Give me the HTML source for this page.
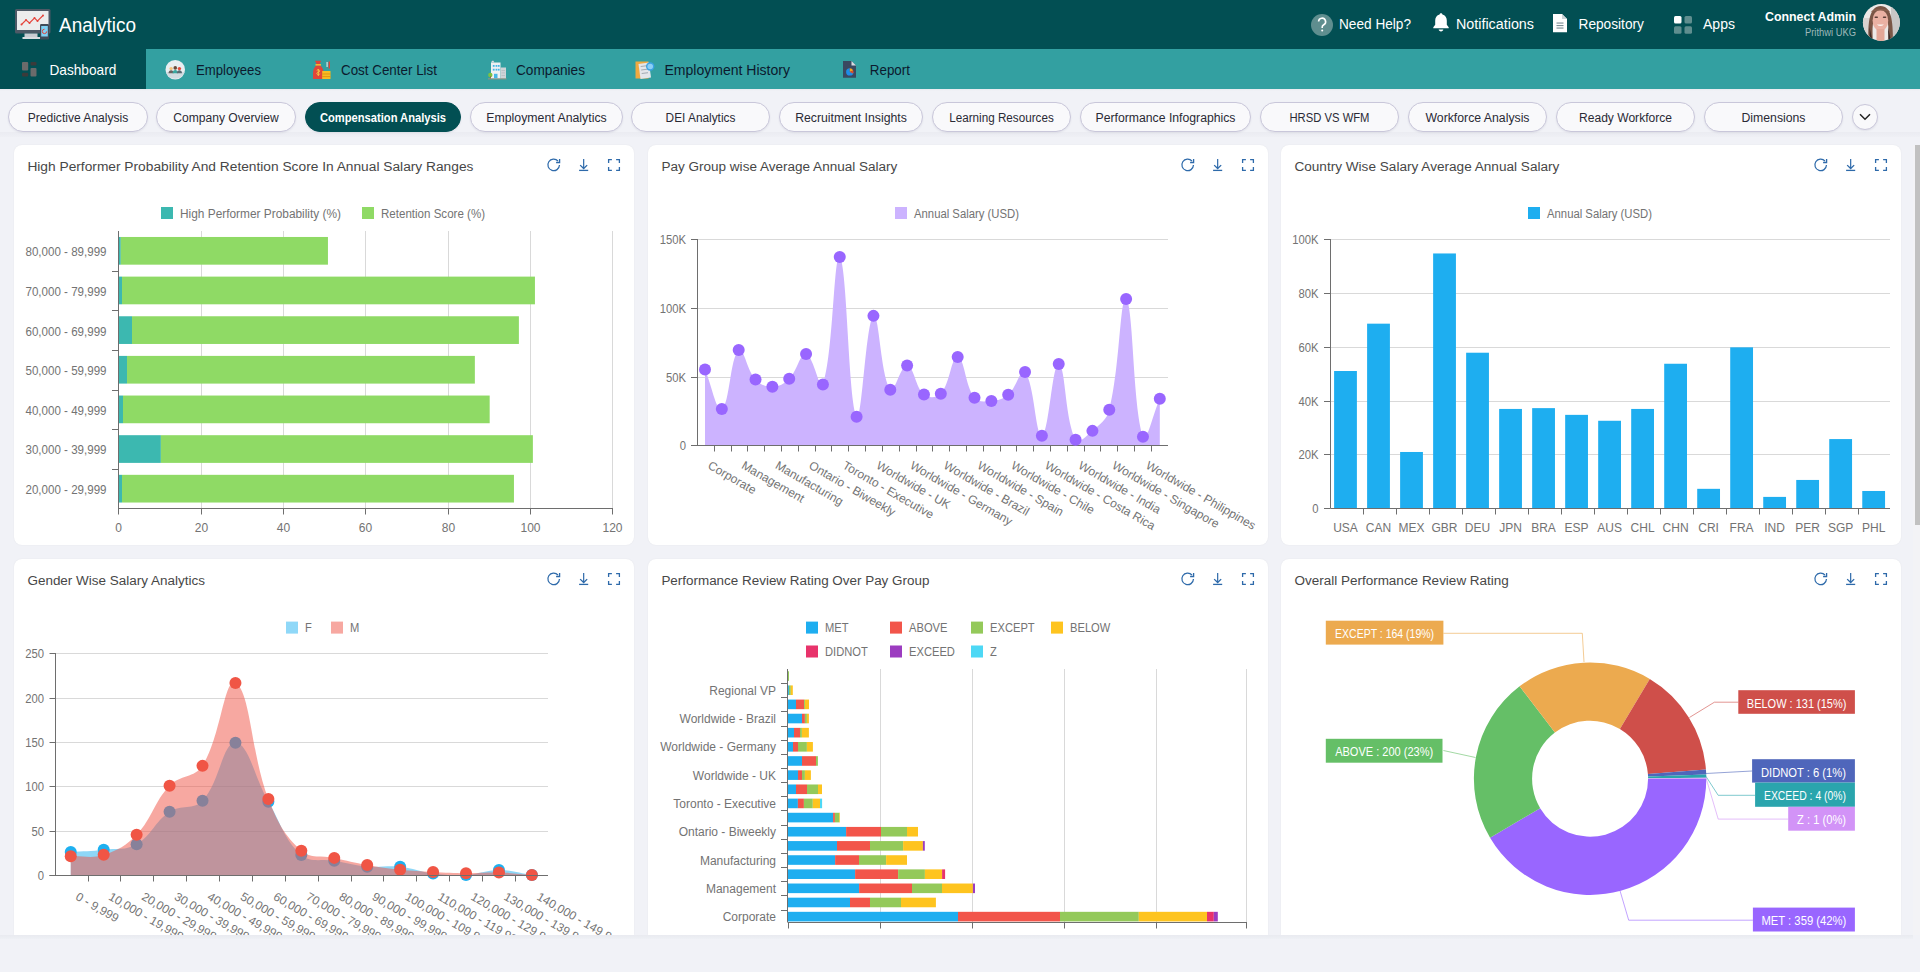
<!DOCTYPE html>
<html><head><meta charset="utf-8">
<style>
*{box-sizing:border-box;margin:0;padding:0}
html,body{width:1920px;height:972px;overflow:hidden;background:#f1f2f7;font-family:"Liberation Sans",sans-serif;color:#333}
.abs{position:absolute}
.pill{position:absolute;top:102px;height:30px;border:1px solid #c9c7da;border-radius:15px;background:#f9f9fb;box-shadow:0 1px 2px rgba(40,40,80,.08)}
.pill.act{background:#024f53;border-color:#024f53}
.panel{position:absolute;background:#fff;border-radius:8px;box-shadow:0 0 1.5px rgba(0,0,0,.07)}
svg text{font-family:"Liberation Sans",sans-serif}
</style></head>
<body>
<div class="abs" style="left:0;top:0;width:1920px;height:49px;background:#024f53"></div>
<div class="abs" style="left:0;top:49px;width:1920px;height:40px;background:#33a0a1"></div>
<div class="abs" style="left:0;top:49px;width:146px;height:40px;background:#024f53"></div>
<div class="abs" style="left:0;top:89px;width:1920px;height:2px;background:linear-gradient(rgba(0,0,0,.03),rgba(0,0,0,0))"></div>

<div class="abs" style="left:0;top:132px;width:1920px;height:5px;background:linear-gradient(rgba(60,60,90,.035),rgba(60,60,90,.01))"></div>
<div class="pill" style="left:8px;width:140px"></div>
<div class="pill" style="left:156px;width:140px"></div>
<div class="pill act" style="left:305px;width:156px"></div>
<div class="pill" style="left:470px;width:153px"></div>
<div class="pill" style="left:631px;width:139px"></div>
<div class="pill" style="left:779px;width:144px"></div>
<div class="pill" style="left:932px;width:139px"></div>
<div class="pill" style="left:1080px;width:171px"></div>
<div class="pill" style="left:1260px;width:139px"></div>
<div class="pill" style="left:1408px;width:139px"></div>
<div class="pill" style="left:1556px;width:139px"></div>
<div class="pill" style="left:1704px;width:139px"></div>
<div class="pill" style="left:1852px;top:104px;width:26px;height:26px;border-radius:13px"></div>
<svg class="abs" style="left:0;top:0" width="1920" height="140" viewBox="0 0 1920 140"><g transform="translate(15,9)">
 <rect x="0" y="0" width="35.5" height="24.5" rx="1.5" fill="#4d5966"/>
 <rect x="2" y="2" width="31.5" height="19" fill="#ececed"/>
 <polyline points="6.5,15.5 11,11 14.5,14 19.5,9 22.5,12 28,6.5" fill="none" stroke="#e5443c" stroke-width="1.1"/>
 <circle cx="6.5" cy="15.5" r="1" fill="#e5443c"/><circle cx="11" cy="11" r="1" fill="#e5443c"/><circle cx="14.5" cy="14" r="1" fill="#e5443c"/><circle cx="19.5" cy="9" r="1" fill="#e5443c"/><circle cx="22.5" cy="12" r="1" fill="#e5443c"/><circle cx="28" cy="6.5" r="1" fill="#e5443c"/>
 <rect x="9.5" y="24.5" width="13" height="4" fill="#c9ccd2"/>
 <rect x="7.5" y="28" width="17.5" height="2" fill="#d9dce0"/>
 <rect x="25" y="15" width="9" height="15.5" rx="1.2" fill="#3f4b58"/>
 <rect x="26.2" y="17" width="6.6" height="10.5" fill="#7fd0f3"/>
 <path d="M29.5 20.2a2.2 2.2 0 1 0 2.2 2.2" fill="none" stroke="#e5443c" stroke-width="1"/>
</g><text x="59.00" y="32.30" font-size="20" fill="#fff" textLength="77.00" lengthAdjust="spacingAndGlyphs">Analytico</text><circle cx="1322" cy="25" r="11" fill="#5f8e8f"/><path d="M1318.6 21.6a3.5 3.5 0 1 1 5.2 3.1c-1 .6-1.6 1.2-1.6 2.4v.8" fill="none" stroke="#fff" stroke-width="1.6"/><circle cx="1322.2" cy="30.6" r="1" fill="#fff"/><text x="1339.00" y="28.70" font-size="14" fill="#fff" textLength="72.00" lengthAdjust="spacingAndGlyphs">Need Help?</text><path d="M1441 13.2c.9 0 1.4.6 1.4 1.3 2.9.7 4.4 3 4.4 6v4.2l1.9 2.5v1H1433.3v-1l1.9-2.5v-4.2c0-3 1.5-5.3 4.4-6 0-.7.5-1.3 1.4-1.3z" fill="#fff"/><path d="M1438.7 29.6h4.6c0 1.1-1 1.9-2.3 1.9s-2.3-.8-2.3-1.9z" fill="#fff"/><text x="1456.00" y="28.70" font-size="14" fill="#fff" textLength="78.00" lengthAdjust="spacingAndGlyphs">Notifications</text><path d="M1553 14h9l5 5v13.3h-14z" fill="#fff"/><path d="M1562 14v5h5z" fill="#c9d3d6"/><g fill="#7d8e95"><rect x="1556.5" y="22.5" width="7" height="1.1"/><rect x="1556.5" y="25" width="7" height="1.1"/><rect x="1556.5" y="27.5" width="7" height="1.1"/></g><text x="1578.50" y="28.70" font-size="14" fill="#fff" textLength="65.40" lengthAdjust="spacingAndGlyphs">Repository</text><rect x="1674" y="16" width="7.5" height="7.5" rx="1.5" fill="#fff"/><rect x="1684.5" y="16" width="7.5" height="7.5" rx="1.5" fill="#5f8e8f"/><rect x="1674" y="26.3" width="7.5" height="7.5" rx="1.5" fill="#5f8e8f"/><rect x="1684.5" y="26.3" width="7.5" height="7.5" rx="1.5" fill="#5f8e8f"/><text x="1703.00" y="28.70" font-size="14" fill="#fff" textLength="32.00" lengthAdjust="spacingAndGlyphs">Apps</text><text x="1856.00" y="20.80" font-size="13" fill="#fff" text-anchor="end" font-weight="bold" textLength="91.00" lengthAdjust="spacingAndGlyphs">Connect Admin</text><text x="1856.00" y="35.60" font-size="10.5" fill="#9fb9ba" text-anchor="end" textLength="51.00" lengthAdjust="spacingAndGlyphs">Prithwi UKG</text><defs><clipPath id="av"><circle cx="1881.4" cy="22.5" r="18.5"/></clipPath></defs>
<g clip-path="url(#av)">
 <rect x="1862" y="3" width="40" height="40" fill="#ece9e7"/>
 <rect x="1891" y="3" width="11" height="40" fill="#c9c7c6"/>
 <rect x="1862" y="18" width="8" height="25" fill="#d8d2cf"/>
 <path d="M1868.5 43 C1868 22 1869 7 1880.5 6 C1892 6 1893 22 1893 43 L1888.5 43 C1889 30 1889 12 1880.5 12 C1872 12 1872 30 1873 43z" fill="#7a5646"/>
 <ellipse cx="1880.4" cy="20.5" rx="7.8" ry="10.5" fill="#eab1a3"/>
 <rect x="1876.5" y="29" width="8" height="14" fill="#e3a797"/>
 <path d="M1871 12 C1872 8 1889 8 1890 12 C1886 10 1875 10 1871 12z" fill="#8a6150"/>
 <rect x="1874.5" y="16.5" width="3.5" height="1.6" rx=".8" fill="#5a3d36"/><rect x="1882.8" y="16.5" width="3.5" height="1.6" rx=".8" fill="#5a3d36"/>
 <path d="M1876.8 24.5 Q1880.4 27.5 1884 24.5z" fill="#fbf4f0"/>
 <path d="M1869.5 27 L1873 43 L1870 43z" fill="#3c2a26"/><path d="M1888 27 L1891.5 43 L1888.5 43z" fill="#3c2a26"/>
</g><g transform="translate(22,62)"><rect x="0" y="0" width="6.2" height="8.5" rx="1" fill="#6b6b6b"/><rect x="8.5" y="0" width="6" height="3.6" rx="1" fill="#3b3b3b"/><rect x="0" y="10.8" width="6.2" height="3.8" rx="1" fill="#3b3b3b"/><rect x="8.5" y="6" width="6" height="8.6" rx="1" fill="#6b6b6b"/></g><text x="49.50" y="75.10" font-size="15" fill="#fff" textLength="66.80" lengthAdjust="spacingAndGlyphs">Dashboard</text><g transform="translate(165.5,60)">
 <circle cx="9.75" cy="9.75" r="9.75" fill="#e9eef1"/>
 <path d="M.5 12 H19 A9.75 9.75 0 0 1 .5 12z" fill="#d2dbe1"/>
 <circle cx="5.6" cy="8.6" r="1.7" fill="#f4c27a"/><circle cx="9.75" cy="7.9" r="1.8" fill="#6a4b3a"/><circle cx="13.9" cy="8.6" r="1.7" fill="#e24b3b"/>
 <path d="M3 13.2c0-2 1.2-3 2.6-3s2.6 1 2.6 3z" fill="#6b6260"/><path d="M7.1 13.2c0-2.2 1.2-3.3 2.65-3.3s2.65 1.1 2.65 3.3z" fill="#3aa6a0"/><path d="M11.3 13.2c0-2 1.2-3 2.6-3s2.6 1 2.6 3z" fill="#5a6a72"/>
</g><text x="196.00" y="75.10" font-size="15" fill="#0c1a2e" textLength="65.00" lengthAdjust="spacingAndGlyphs">Employees</text><g transform="translate(312,60)">
 <path d="M4.5 4 L3 0.8 L9 .8 L7.8 4z" fill="#e0453a"/>
 <path d="M1 13.5C1 8.5 3.5 5 6.3 5s5.3 3.5 5.3 8.5v5.5H1z" fill="#e0453a"/>
 <rect x="3.5" y="4" width="5.5" height="1.6" fill="#f5b82e"/>
 <path d="M6.3 9v7" stroke="#f5c542" stroke-width="1"/><path d="M4.8 10.5c0-1 3-1 3 .5s-3 1-3 2.5 3 1.5 3 .2" fill="none" stroke="#f5c542" stroke-width=".9"/>
 <rect x="10.2" y="11" width="8.3" height="8" fill="#f6bd22"/>
 <g fill="#dd8f12"><rect x="10.2" y="13.5" width="8.3" height=".9"/><rect x="10.2" y="16.2" width="8.3" height=".9"/></g>
 <rect x="14.5" y="2" width="1.2" height="5" fill="#dfe3e6"/><rect x="16.6" y="1.5" width="1.4" height="7" fill="#e0453a"/>
</g><text x="341.00" y="75.10" font-size="15" fill="#0c1a2e" textLength="96.00" lengthAdjust="spacingAndGlyphs">Cost Center List</text><g transform="translate(488,60)">
 <rect x="3" y="2.5" width="9.5" height="16" fill="#eef0f2"/><path d="M3 2.5 l1.2-1.8h1.2l1 1.8z" fill="#d8dce0"/>
 <rect x="12.5" y="7.5" width="5.5" height="11" fill="#cfd4d8"/>
 <g fill="#45b6e6"><rect x="4.8" y="5" width="1.8" height="1.8"/><rect x="7.6" y="5" width="1.8" height="1.8"/><rect x="10" y="5" width="1.6" height="1.8"/><rect x="4.8" y="8.8" width="1.8" height="1.8"/><rect x="7.6" y="8.8" width="1.8" height="1.8"/><rect x="10" y="8.8" width="1.6" height="1.8"/><rect x="6" y="13.8" width="3.5" height="4.7"/></g>
 <g fill="#b5bcc2"><rect x="13.5" y="10" width="3.5" height=".8"/><rect x="13.5" y="12.5" width="3.5" height=".8"/><rect x="13.5" y="15" width="3.5" height=".8"/></g>
 <circle cx="2.3" cy="15" r="2.2" fill="#7cc242"/><rect x="2" y="16" width=".8" height="2.8" fill="#9b6b3b"/>
 <rect x="0" y="18.5" width="18.5" height=".8" fill="#b48f7a"/>
</g><text x="516.00" y="75.10" font-size="15" fill="#0c1a2e" textLength="69.00" lengthAdjust="spacingAndGlyphs">Companies</text><g transform="translate(635.5,60.5)">
 <rect x="0" y="1" width="13" height="17" fill="#f0a940"/>
 <path d="M3 3.5 L13.5 2 L15.5 17 L5 18.5z" fill="#e3e6ea"/>
 <g stroke="#9aa3aa" stroke-width=".9"><path d="M5.2 6 L11.5 5.2"/><path d="M5.7 9.5 L12 8.7"/><path d="M6.2 13 L12.5 12.2"/></g>
 <circle cx="14.7" cy="6" r="4.2" fill="#3aa2e2"/><circle cx="14.7" cy="6" r="2.8" fill="#8ccff5"/>
</g><text x="664.50" y="75.10" font-size="15" fill="#0c1a2e" textLength="125.50" lengthAdjust="spacingAndGlyphs">Employment History</text><g transform="translate(843,61)">
 <path d="M0 0H8.5L13 4.5V16.8H0z" fill="#3a4860"/><path d="M8.5 0 L13 4.5 H8.5z" fill="#d9dde3"/>
 <path d="M6.8 7.2 A3.7 3.7 0 1 0 10.5 10.9 H6.8z" fill="#1d8ce8"/>
 <path d="M6.8 7.2 A3.7 3.7 0 0 1 10.2 9.4 L6.8 10.9z" fill="#f6a21d"/>
 <path d="M10.2 9.4 A3.7 3.7 0 0 1 10.5 10.9 L10 12.6 L6.8 10.9z" fill="#e24a2a"/>
</g><text x="869.80" y="75.10" font-size="15" fill="#0c1a2e" textLength="40.20" lengthAdjust="spacingAndGlyphs">Report</text><text x="78.00" y="122.00" font-size="12.5" fill="#2a2a35" text-anchor="middle" textLength="100.60" lengthAdjust="spacingAndGlyphs">Predictive Analysis</text><text x="226.00" y="122.00" font-size="12.5" fill="#2a2a35" text-anchor="middle" textLength="105.50" lengthAdjust="spacingAndGlyphs">Company Overview</text><text x="383.00" y="122.00" font-size="12.5" fill="#fff" text-anchor="middle" font-weight="bold" textLength="126.00" lengthAdjust="spacingAndGlyphs">Compensation Analysis</text><text x="546.50" y="122.00" font-size="12.5" fill="#2a2a35" text-anchor="middle" textLength="120.50" lengthAdjust="spacingAndGlyphs">Employment Analytics</text><text x="700.50" y="122.00" font-size="12.5" fill="#2a2a35" text-anchor="middle" textLength="69.80" lengthAdjust="spacingAndGlyphs">DEI Analytics</text><text x="851.00" y="122.00" font-size="12.5" fill="#2a2a35" text-anchor="middle" textLength="111.70" lengthAdjust="spacingAndGlyphs">Recruitment Insights</text><text x="1001.50" y="122.00" font-size="12.5" fill="#2a2a35" text-anchor="middle" textLength="104.50" lengthAdjust="spacingAndGlyphs">Learning Resources</text><text x="1165.50" y="122.00" font-size="12.5" fill="#2a2a35" text-anchor="middle" textLength="140.00" lengthAdjust="spacingAndGlyphs">Performance Infographics</text><text x="1329.50" y="122.00" font-size="12.5" fill="#2a2a35" text-anchor="middle" textLength="80.00" lengthAdjust="spacingAndGlyphs">HRSD VS WFM</text><text x="1477.50" y="122.00" font-size="12.5" fill="#2a2a35" text-anchor="middle" textLength="104.00" lengthAdjust="spacingAndGlyphs">Workforce Analysis</text><text x="1625.50" y="122.00" font-size="12.5" fill="#2a2a35" text-anchor="middle" textLength="93.00" lengthAdjust="spacingAndGlyphs">Ready Workforce</text><text x="1773.50" y="122.00" font-size="12.5" fill="#2a2a35" text-anchor="middle" textLength="64.00" lengthAdjust="spacingAndGlyphs">Dimensions</text><path d="M1860 114.2 L1865 119.2 L1870 114.2" fill="none" stroke="#222" stroke-width="1.5"/></svg>
<div class="abs" style="left:1913px;top:145px;width:7px;height:790px;background:#f3f3f6"></div>
<div class="abs" style="left:1915px;top:145px;width:5px;height:380px;background:#c1c1c1"></div>
<div class="panel" id="p1" style="left:14px;top:145px;width:620px;height:400px;border-radius:8px"></div><svg style="position:absolute;left:14px;top:145px" width="620" height="40" viewBox="14 145 620 40" ><text x="27.40" y="170.90" font-size="13.7" fill="#474747" textLength="446" lengthAdjust="spacingAndGlyphs">High Performer Probability And Retention Score In Annual Salary Ranges</text></svg>
<div class="panel" id="p2" style="left:648px;top:145px;width:620px;height:400px;border-radius:8px"></div><svg style="position:absolute;left:648px;top:145px" width="620" height="40" viewBox="648 145 620 40" ><text x="661.40" y="170.90" font-size="13.7" fill="#474747" textLength="236" lengthAdjust="spacingAndGlyphs">Pay Group wise Average Annual Salary</text></svg>
<div class="panel" id="p3" style="left:1281px;top:145px;width:620px;height:400px;border-radius:8px"></div><svg style="position:absolute;left:1281px;top:145px" width="620" height="40" viewBox="1281 145 620 40" ><text x="1294.40" y="170.90" font-size="13.7" fill="#474747" textLength="265" lengthAdjust="spacingAndGlyphs">Country Wise Salary Average Annual Salary</text></svg>
<div class="panel" id="p4" style="left:14px;top:559px;width:620px;height:376px;border-radius:8px 8px 0 0"></div><svg style="position:absolute;left:14px;top:559px" width="620" height="40" viewBox="14 559 620 40" ><text x="27.40" y="584.90" font-size="13.7" fill="#474747" textLength="177.6" lengthAdjust="spacingAndGlyphs">Gender Wise Salary Analytics</text></svg>
<div class="panel" id="p5" style="left:648px;top:559px;width:620px;height:376px;border-radius:8px 8px 0 0"></div><svg style="position:absolute;left:648px;top:559px" width="620" height="40" viewBox="648 559 620 40" ><text x="661.40" y="584.90" font-size="13.7" fill="#474747" textLength="268" lengthAdjust="spacingAndGlyphs">Performance Review Rating Over Pay Group</text></svg>
<div class="panel" id="p6" style="left:1281px;top:559px;width:620px;height:376px;border-radius:8px 8px 0 0"></div><svg style="position:absolute;left:1281px;top:559px" width="620" height="40" viewBox="1281 559 620 40" ><text x="1294.40" y="584.90" font-size="13.7" fill="#474747" textLength="214.5" lengthAdjust="spacingAndGlyphs">Overall Performance Review Rating</text></svg>
<svg style="position:absolute;left:544px;top:153px" width="80" height="24" viewBox="544 153 80 24" ><path d="M559.47 165.10 A5.8 5.8 0 1 1 557.98 161.02" fill="none" stroke="#2e6aaa" stroke-width="1.25"/><path d="M556.10 162.50 H559.60 V159.10" fill="none" stroke="#2e6aaa" stroke-width="1.3"/><line x1="583.67" y1="159.1" x2="583.67" y2="168.2" stroke="#2e6aaa" stroke-width="1.2"/><path d="M580.17 165.10 L583.67 168.50 L587.17 165.10" fill="none" stroke="#2e6aaa" stroke-width="1.3"/><line x1="579.10" y1="170.4" x2="588.20" y2="170.4" stroke="#2e6aaa" stroke-width="1.3"/><path d="M608.6 162.9V159.6H611.9 M616.1 159.6H619.4V162.9 M619.4 167.1V170.4H616.1 M611.9 170.4H608.6V167.1" fill="none" stroke="#2e6aaa" stroke-width="1.3"/></svg>
<svg style="position:absolute;left:1178px;top:153px" width="80" height="24" viewBox="1178 153 80 24" ><path d="M1193.47 165.10 A5.8 5.8 0 1 1 1191.98 161.02" fill="none" stroke="#2e6aaa" stroke-width="1.25"/><path d="M1190.10 162.50 H1193.60 V159.10" fill="none" stroke="#2e6aaa" stroke-width="1.3"/><line x1="1217.67" y1="159.1" x2="1217.67" y2="168.2" stroke="#2e6aaa" stroke-width="1.2"/><path d="M1214.17 165.10 L1217.67 168.50 L1221.17 165.10" fill="none" stroke="#2e6aaa" stroke-width="1.3"/><line x1="1213.10" y1="170.4" x2="1222.20" y2="170.4" stroke="#2e6aaa" stroke-width="1.3"/><path d="M1242.6 162.9V159.6H1245.8999999999999 M1250.1000000000001 159.6H1253.4V162.9 M1253.4 167.1V170.4H1250.1000000000001 M1245.8999999999999 170.4H1242.6V167.1" fill="none" stroke="#2e6aaa" stroke-width="1.3"/></svg>
<svg style="position:absolute;left:1811px;top:153px" width="80" height="24" viewBox="1811 153 80 24" ><path d="M1826.47 165.10 A5.8 5.8 0 1 1 1824.98 161.02" fill="none" stroke="#2e6aaa" stroke-width="1.25"/><path d="M1823.10 162.50 H1826.60 V159.10" fill="none" stroke="#2e6aaa" stroke-width="1.3"/><line x1="1850.67" y1="159.1" x2="1850.67" y2="168.2" stroke="#2e6aaa" stroke-width="1.2"/><path d="M1847.17 165.10 L1850.67 168.50 L1854.17 165.10" fill="none" stroke="#2e6aaa" stroke-width="1.3"/><line x1="1846.10" y1="170.4" x2="1855.20" y2="170.4" stroke="#2e6aaa" stroke-width="1.3"/><path d="M1875.6 162.9V159.6H1878.8999999999999 M1883.1000000000001 159.6H1886.4V162.9 M1886.4 167.1V170.4H1883.1000000000001 M1878.8999999999999 170.4H1875.6V167.1" fill="none" stroke="#2e6aaa" stroke-width="1.3"/></svg>
<svg style="position:absolute;left:544px;top:567px" width="80" height="24" viewBox="544 567 80 24" ><path d="M559.47 579.10 A5.8 5.8 0 1 1 557.98 575.02" fill="none" stroke="#2e6aaa" stroke-width="1.25"/><path d="M556.10 576.50 H559.60 V573.10" fill="none" stroke="#2e6aaa" stroke-width="1.3"/><line x1="583.67" y1="573.1" x2="583.67" y2="582.2" stroke="#2e6aaa" stroke-width="1.2"/><path d="M580.17 579.10 L583.67 582.50 L587.17 579.10" fill="none" stroke="#2e6aaa" stroke-width="1.3"/><line x1="579.10" y1="584.4" x2="588.20" y2="584.4" stroke="#2e6aaa" stroke-width="1.3"/><path d="M608.6 576.9V573.6H611.9 M616.1 573.6H619.4V576.9 M619.4 581.1V584.4H616.1 M611.9 584.4H608.6V581.1" fill="none" stroke="#2e6aaa" stroke-width="1.3"/></svg>
<svg style="position:absolute;left:1178px;top:567px" width="80" height="24" viewBox="1178 567 80 24" ><path d="M1193.47 579.10 A5.8 5.8 0 1 1 1191.98 575.02" fill="none" stroke="#2e6aaa" stroke-width="1.25"/><path d="M1190.10 576.50 H1193.60 V573.10" fill="none" stroke="#2e6aaa" stroke-width="1.3"/><line x1="1217.67" y1="573.1" x2="1217.67" y2="582.2" stroke="#2e6aaa" stroke-width="1.2"/><path d="M1214.17 579.10 L1217.67 582.50 L1221.17 579.10" fill="none" stroke="#2e6aaa" stroke-width="1.3"/><line x1="1213.10" y1="584.4" x2="1222.20" y2="584.4" stroke="#2e6aaa" stroke-width="1.3"/><path d="M1242.6 576.9V573.6H1245.8999999999999 M1250.1000000000001 573.6H1253.4V576.9 M1253.4 581.1V584.4H1250.1000000000001 M1245.8999999999999 584.4H1242.6V581.1" fill="none" stroke="#2e6aaa" stroke-width="1.3"/></svg>
<svg style="position:absolute;left:1811px;top:567px" width="80" height="24" viewBox="1811 567 80 24" ><path d="M1826.47 579.10 A5.8 5.8 0 1 1 1824.98 575.02" fill="none" stroke="#2e6aaa" stroke-width="1.25"/><path d="M1823.10 576.50 H1826.60 V573.10" fill="none" stroke="#2e6aaa" stroke-width="1.3"/><line x1="1850.67" y1="573.1" x2="1850.67" y2="582.2" stroke="#2e6aaa" stroke-width="1.2"/><path d="M1847.17 579.10 L1850.67 582.50 L1854.17 579.10" fill="none" stroke="#2e6aaa" stroke-width="1.3"/><line x1="1846.10" y1="584.4" x2="1855.20" y2="584.4" stroke="#2e6aaa" stroke-width="1.3"/><path d="M1875.6 576.9V573.6H1878.8999999999999 M1883.1000000000001 573.6H1886.4V576.9 M1886.4 581.1V584.4H1883.1000000000001 M1878.8999999999999 584.4H1875.6V581.1" fill="none" stroke="#2e6aaa" stroke-width="1.3"/></svg>
<svg style="position:absolute;left:14px;top:145px" width="620" height="400" viewBox="14 145 620 400" ><rect x="161.00" y="207.00" width="12.00" height="12.00" fill="#3cb8b0"/><text x="180.00" y="217.50" font-size="12" fill="#737373" textLength="161" lengthAdjust="spacingAndGlyphs">High Performer Probability (%)</text><rect x="362.00" y="207.00" width="12.00" height="12.00" fill="#8fda65"/><text x="381.00" y="217.50" font-size="12" fill="#737373" textLength="104" lengthAdjust="spacingAndGlyphs">Retention Score (%)</text><line x1="201.5" y1="231.0" x2="201.5" y2="508.5" stroke="#d9d9d9" stroke-width="1"/><line x1="283.5" y1="231.0" x2="283.5" y2="508.5" stroke="#d9d9d9" stroke-width="1"/><line x1="365.5" y1="231.0" x2="365.5" y2="508.5" stroke="#d9d9d9" stroke-width="1"/><line x1="448.5" y1="231.0" x2="448.5" y2="508.5" stroke="#d9d9d9" stroke-width="1"/><line x1="530.5" y1="231.0" x2="530.5" y2="508.5" stroke="#d9d9d9" stroke-width="1"/><line x1="612.5" y1="231.0" x2="612.5" y2="508.5" stroke="#d9d9d9" stroke-width="1"/><rect x="118.50" y="236.97" width="2.30" height="27.70" fill="#3cb8b0"/><rect x="120.80" y="236.97" width="207.15" height="27.70" fill="#8fda65"/><text x="106.50" y="256.22" font-size="12" fill="#737373" text-anchor="end" textLength="81" lengthAdjust="spacingAndGlyphs">80,000 - 89,999</text><rect x="118.50" y="276.61" width="3.50" height="27.70" fill="#3cb8b0"/><rect x="122.00" y="276.61" width="412.94" height="27.70" fill="#8fda65"/><text x="106.50" y="295.86" font-size="12" fill="#737373" text-anchor="end" textLength="81" lengthAdjust="spacingAndGlyphs">70,000 - 79,999</text><rect x="118.50" y="316.26" width="13.50" height="27.70" fill="#3cb8b0"/><rect x="132.00" y="316.26" width="386.89" height="27.70" fill="#8fda65"/><text x="106.50" y="335.51" font-size="12" fill="#737373" text-anchor="end" textLength="81" lengthAdjust="spacingAndGlyphs">60,000 - 69,999</text><rect x="118.50" y="355.90" width="8.52" height="27.70" fill="#3cb8b0"/><rect x="127.02" y="355.90" width="347.84" height="27.70" fill="#8fda65"/><text x="106.50" y="375.15" font-size="12" fill="#737373" text-anchor="end" textLength="81" lengthAdjust="spacingAndGlyphs">50,000 - 59,999</text><rect x="118.50" y="395.54" width="4.49" height="27.70" fill="#3cb8b0"/><rect x="122.99" y="395.54" width="366.69" height="27.70" fill="#8fda65"/><text x="106.50" y="414.79" font-size="12" fill="#737373" text-anchor="end" textLength="81" lengthAdjust="spacingAndGlyphs">40,000 - 49,999</text><rect x="118.50" y="435.19" width="42.38" height="27.70" fill="#3cb8b0"/><rect x="160.88" y="435.19" width="372.00" height="27.70" fill="#8fda65"/><text x="106.50" y="454.44" font-size="12" fill="#737373" text-anchor="end" textLength="81" lengthAdjust="spacingAndGlyphs">30,000 - 39,999</text><rect x="118.50" y="474.83" width="3.50" height="27.70" fill="#3cb8b0"/><rect x="122.00" y="474.83" width="391.95" height="27.70" fill="#8fda65"/><text x="106.50" y="494.08" font-size="12" fill="#737373" text-anchor="end" textLength="81" lengthAdjust="spacingAndGlyphs">20,000 - 29,999</text><line x1="112" y1="271.5" x2="118.5" y2="271.5" stroke="#6e6e6e" stroke-width="1"/><line x1="112" y1="310.5" x2="118.5" y2="310.5" stroke="#6e6e6e" stroke-width="1"/><line x1="112" y1="350.5" x2="118.5" y2="350.5" stroke="#6e6e6e" stroke-width="1"/><line x1="112" y1="390.5" x2="118.5" y2="390.5" stroke="#6e6e6e" stroke-width="1"/><line x1="112" y1="429.5" x2="118.5" y2="429.5" stroke="#6e6e6e" stroke-width="1"/><line x1="112" y1="469.5" x2="118.5" y2="469.5" stroke="#6e6e6e" stroke-width="1"/><line x1="118.5" y1="231.0" x2="118.5" y2="509.0" stroke="#6e6e6e" stroke-width="1"/><line x1="118" y1="508.5" x2="613" y2="508.5" stroke="#6e6e6e" stroke-width="1"/><line x1="118.5" y1="508.5" x2="118.5" y2="514.5" stroke="#6e6e6e" stroke-width="1"/><text x="118.50" y="531.50" font-size="12" fill="#737373" text-anchor="middle">0</text><line x1="201.5" y1="508.5" x2="201.5" y2="514.5" stroke="#6e6e6e" stroke-width="1"/><text x="201.50" y="531.50" font-size="12" fill="#737373" text-anchor="middle">20</text><line x1="283.5" y1="508.5" x2="283.5" y2="514.5" stroke="#6e6e6e" stroke-width="1"/><text x="283.50" y="531.50" font-size="12" fill="#737373" text-anchor="middle">40</text><line x1="365.5" y1="508.5" x2="365.5" y2="514.5" stroke="#6e6e6e" stroke-width="1"/><text x="365.50" y="531.50" font-size="12" fill="#737373" text-anchor="middle">60</text><line x1="448.5" y1="508.5" x2="448.5" y2="514.5" stroke="#6e6e6e" stroke-width="1"/><text x="448.50" y="531.50" font-size="12" fill="#737373" text-anchor="middle">80</text><line x1="530.5" y1="508.5" x2="530.5" y2="514.5" stroke="#6e6e6e" stroke-width="1"/><text x="530.50" y="531.50" font-size="12" fill="#737373" text-anchor="middle">100</text><line x1="612.5" y1="508.5" x2="612.5" y2="514.5" stroke="#6e6e6e" stroke-width="1"/><text x="612.50" y="531.50" font-size="12" fill="#737373" text-anchor="middle">120</text></svg>
<svg style="position:absolute;left:648px;top:145px" width="620" height="400" viewBox="648 145 620 400" ><rect x="895.00" y="207.00" width="12.00" height="12.00" fill="#ccb3ff"/><text x="914.00" y="217.50" font-size="12" fill="#737373" textLength="105" lengthAdjust="spacingAndGlyphs">Annual Salary (USD)</text><line x1="697.5" y1="377.5" x2="1168" y2="377.5" stroke="#d9d9d9" stroke-width="1"/><line x1="697.5" y1="308.5" x2="1168" y2="308.5" stroke="#d9d9d9" stroke-width="1"/><line x1="697.5" y1="239.5" x2="1168" y2="239.5" stroke="#d9d9d9" stroke-width="1"/><path d="M705.00 369.59 C711.74 385.37 716.31 412.26 721.84 409.03 C729.78 404.40 730.01 357.55 738.69 349.94 C743.49 345.73 746.78 369.92 755.53 379.49 C760.26 384.65 765.70 386.93 772.38 386.77 C779.18 386.60 784.04 383.71 789.22 378.66 C797.52 370.58 799.85 352.84 806.07 353.93 C813.33 355.20 820.03 392.85 822.91 384.57 C833.51 354.10 833.76 251.34 839.76 257.06 C847.24 264.20 848.37 402.35 856.60 416.72 C861.84 425.87 865.70 322.09 873.44 315.87 C879.18 311.26 880.58 375.32 890.29 389.65 C894.06 395.21 900.84 364.68 907.13 365.61 C914.32 366.66 915.01 387.14 923.98 394.60 C928.49 398.35 936.85 398.08 940.82 393.64 C950.33 383.02 951.23 356.16 957.67 356.95 C964.71 357.81 964.80 385.09 974.51 397.76 C978.28 402.68 984.77 401.51 991.36 400.92 C998.25 400.30 1002.96 399.22 1008.20 394.74 C1016.44 387.68 1021.00 367.15 1025.04 372.07 C1034.47 383.53 1035.53 437.21 1041.89 435.68 C1049.01 433.97 1052.17 363.18 1058.73 363.96 C1065.64 364.78 1064.75 418.17 1075.58 439.67 C1078.23 444.93 1086.86 435.82 1092.42 430.87 C1100.34 423.84 1106.65 419.97 1109.27 409.71 C1120.12 367.21 1120.09 294.16 1126.11 298.97 C1133.57 304.93 1132.58 405.93 1142.96 436.64 C1146.06 445.83 1153.06 413.89 1159.80 398.72 L1159.80 445.3 L705.00 445.3 Z" fill="#ccb3ff"/><line x1="697.5" y1="239" x2="697.5" y2="445.3" stroke="#6e6e6e" stroke-width="1"/><line x1="691" y1="445.5" x2="697.5" y2="445.5" stroke="#6e6e6e" stroke-width="1"/><text x="686.00" y="449.80" font-size="12" fill="#737373" text-anchor="end" textLength="6.272737499999999" lengthAdjust="spacingAndGlyphs">0</text><line x1="691" y1="377.5" x2="697.5" y2="377.5" stroke="#6e6e6e" stroke-width="1"/><text x="686.00" y="381.80" font-size="12" fill="#737373" text-anchor="end" textLength="20.0695875" lengthAdjust="spacingAndGlyphs">50K</text><line x1="691" y1="308.5" x2="697.5" y2="308.5" stroke="#6e6e6e" stroke-width="1"/><text x="686.00" y="312.80" font-size="12" fill="#737373" text-anchor="end" textLength="26.342325" lengthAdjust="spacingAndGlyphs">100K</text><line x1="691" y1="239.5" x2="697.5" y2="239.5" stroke="#6e6e6e" stroke-width="1"/><text x="686.00" y="243.80" font-size="12" fill="#737373" text-anchor="end" textLength="26.342325" lengthAdjust="spacingAndGlyphs">150K</text><line x1="691" y1="445.5" x2="1168" y2="445.5" stroke="#6e6e6e" stroke-width="1"/><line x1="714.5" y1="445.5" x2="714.5" y2="451.5" stroke="#6e6e6e" stroke-width="1"/><line x1="731.5" y1="445.5" x2="731.5" y2="451.5" stroke="#6e6e6e" stroke-width="1"/><line x1="747.5" y1="445.5" x2="747.5" y2="451.5" stroke="#6e6e6e" stroke-width="1"/><line x1="764.5" y1="445.5" x2="764.5" y2="451.5" stroke="#6e6e6e" stroke-width="1"/><line x1="781.5" y1="445.5" x2="781.5" y2="451.5" stroke="#6e6e6e" stroke-width="1"/><line x1="798.5" y1="445.5" x2="798.5" y2="451.5" stroke="#6e6e6e" stroke-width="1"/><line x1="815.5" y1="445.5" x2="815.5" y2="451.5" stroke="#6e6e6e" stroke-width="1"/><line x1="831.5" y1="445.5" x2="831.5" y2="451.5" stroke="#6e6e6e" stroke-width="1"/><line x1="848.5" y1="445.5" x2="848.5" y2="451.5" stroke="#6e6e6e" stroke-width="1"/><line x1="865.5" y1="445.5" x2="865.5" y2="451.5" stroke="#6e6e6e" stroke-width="1"/><line x1="882.5" y1="445.5" x2="882.5" y2="451.5" stroke="#6e6e6e" stroke-width="1"/><line x1="899.5" y1="445.5" x2="899.5" y2="451.5" stroke="#6e6e6e" stroke-width="1"/><line x1="916.5" y1="445.5" x2="916.5" y2="451.5" stroke="#6e6e6e" stroke-width="1"/><line x1="932.5" y1="445.5" x2="932.5" y2="451.5" stroke="#6e6e6e" stroke-width="1"/><line x1="949.5" y1="445.5" x2="949.5" y2="451.5" stroke="#6e6e6e" stroke-width="1"/><line x1="966.5" y1="445.5" x2="966.5" y2="451.5" stroke="#6e6e6e" stroke-width="1"/><line x1="983.5" y1="445.5" x2="983.5" y2="451.5" stroke="#6e6e6e" stroke-width="1"/><line x1="1000.5" y1="445.5" x2="1000.5" y2="451.5" stroke="#6e6e6e" stroke-width="1"/><line x1="1016.5" y1="445.5" x2="1016.5" y2="451.5" stroke="#6e6e6e" stroke-width="1"/><line x1="1033.5" y1="445.5" x2="1033.5" y2="451.5" stroke="#6e6e6e" stroke-width="1"/><line x1="1050.5" y1="445.5" x2="1050.5" y2="451.5" stroke="#6e6e6e" stroke-width="1"/><line x1="1067.5" y1="445.5" x2="1067.5" y2="451.5" stroke="#6e6e6e" stroke-width="1"/><line x1="1084.5" y1="445.5" x2="1084.5" y2="451.5" stroke="#6e6e6e" stroke-width="1"/><line x1="1100.5" y1="445.5" x2="1100.5" y2="451.5" stroke="#6e6e6e" stroke-width="1"/><line x1="1117.5" y1="445.5" x2="1117.5" y2="451.5" stroke="#6e6e6e" stroke-width="1"/><line x1="1134.5" y1="445.5" x2="1134.5" y2="451.5" stroke="#6e6e6e" stroke-width="1"/><line x1="1151.5" y1="445.5" x2="1151.5" y2="451.5" stroke="#6e6e6e" stroke-width="1"/><circle cx="705.00" cy="369.59" r="6" fill="#9966ff"/><circle cx="721.84" cy="409.03" r="6" fill="#9966ff"/><circle cx="738.69" cy="349.94" r="6" fill="#9966ff"/><circle cx="755.53" cy="379.49" r="6" fill="#9966ff"/><circle cx="772.38" cy="386.77" r="6" fill="#9966ff"/><circle cx="789.22" cy="378.66" r="6" fill="#9966ff"/><circle cx="806.07" cy="353.93" r="6" fill="#9966ff"/><circle cx="822.91" cy="384.57" r="6" fill="#9966ff"/><circle cx="839.76" cy="257.06" r="6" fill="#9966ff"/><circle cx="856.60" cy="416.72" r="6" fill="#9966ff"/><circle cx="873.44" cy="315.87" r="6" fill="#9966ff"/><circle cx="890.29" cy="389.65" r="6" fill="#9966ff"/><circle cx="907.13" cy="365.61" r="6" fill="#9966ff"/><circle cx="923.98" cy="394.60" r="6" fill="#9966ff"/><circle cx="940.82" cy="393.64" r="6" fill="#9966ff"/><circle cx="957.67" cy="356.95" r="6" fill="#9966ff"/><circle cx="974.51" cy="397.76" r="6" fill="#9966ff"/><circle cx="991.36" cy="400.92" r="6" fill="#9966ff"/><circle cx="1008.20" cy="394.74" r="6" fill="#9966ff"/><circle cx="1025.04" cy="372.07" r="6" fill="#9966ff"/><circle cx="1041.89" cy="435.68" r="6" fill="#9966ff"/><circle cx="1058.73" cy="363.96" r="6" fill="#9966ff"/><circle cx="1075.58" cy="439.67" r="6" fill="#9966ff"/><circle cx="1092.42" cy="430.87" r="6" fill="#9966ff"/><circle cx="1109.27" cy="409.71" r="6" fill="#9966ff"/><circle cx="1126.11" cy="298.97" r="6" fill="#9966ff"/><circle cx="1142.96" cy="436.64" r="6" fill="#9966ff"/><circle cx="1159.80" cy="398.72" r="6" fill="#9966ff"/><text x="707.00" y="467.80" font-size="12" fill="#737373" transform="rotate(30 707.00 467.80)">Corporate</text><text x="740.69" y="467.80" font-size="12" fill="#737373" transform="rotate(30 740.69 467.80)">Management</text><text x="774.38" y="467.80" font-size="12" fill="#737373" transform="rotate(30 774.38 467.80)">Manufacturing</text><text x="808.07" y="467.80" font-size="12" fill="#737373" transform="rotate(30 808.07 467.80)">Ontario - Biweekly</text><text x="841.76" y="467.80" font-size="12" fill="#737373" transform="rotate(30 841.76 467.80)">Toronto - Executive</text><text x="875.44" y="467.80" font-size="12" fill="#737373" transform="rotate(30 875.44 467.80)">Worldwide - UK</text><text x="909.13" y="467.80" font-size="12" fill="#737373" transform="rotate(30 909.13 467.80)">Worldwide - Germany</text><text x="942.82" y="467.80" font-size="12" fill="#737373" transform="rotate(30 942.82 467.80)">Worldwide - Brazil</text><text x="976.51" y="467.80" font-size="12" fill="#737373" transform="rotate(30 976.51 467.80)">Worldwide - Spain</text><text x="1010.20" y="467.80" font-size="12" fill="#737373" transform="rotate(30 1010.20 467.80)">Worldwide - Chile</text><text x="1043.89" y="467.80" font-size="12" fill="#737373" transform="rotate(30 1043.89 467.80)">Worldwide - Costa Rica</text><text x="1077.58" y="467.80" font-size="12" fill="#737373" transform="rotate(30 1077.58 467.80)">Worldwide - India</text><text x="1111.27" y="467.80" font-size="12" fill="#737373" transform="rotate(30 1111.27 467.80)">Worldwide - Singapore</text><text x="1144.96" y="467.80" font-size="12" fill="#737373" transform="rotate(30 1144.96 467.80)">Worldwide - Philippines</text></svg>
<svg style="position:absolute;left:1281px;top:145px" width="620" height="400" viewBox="1281 145 620 400" ><rect x="1528.00" y="207.00" width="12.00" height="12.00" fill="#1eaef0"/><text x="1547.00" y="217.50" font-size="12" fill="#737373" textLength="105" lengthAdjust="spacingAndGlyphs">Annual Salary (USD)</text><line x1="1330.5" y1="454.5" x2="1890" y2="454.5" stroke="#d9d9d9" stroke-width="1"/><line x1="1330.5" y1="401.5" x2="1890" y2="401.5" stroke="#d9d9d9" stroke-width="1"/><line x1="1330.5" y1="347.5" x2="1890" y2="347.5" stroke="#d9d9d9" stroke-width="1"/><line x1="1330.5" y1="293.5" x2="1890" y2="293.5" stroke="#d9d9d9" stroke-width="1"/><line x1="1330.5" y1="239.5" x2="1890" y2="239.5" stroke="#d9d9d9" stroke-width="1"/><rect x="1334.10" y="371.01" width="22.80" height="137.19" fill="#1eaef0"/><text x="1345.50" y="531.60" font-size="12" fill="#737373" text-anchor="middle">USA</text><rect x="1367.11" y="323.67" width="22.80" height="184.53" fill="#1eaef0"/><text x="1378.51" y="531.60" font-size="12" fill="#737373" text-anchor="middle">CAN</text><rect x="1400.12" y="451.98" width="22.80" height="56.22" fill="#1eaef0"/><text x="1411.52" y="531.60" font-size="12" fill="#737373" text-anchor="middle">MEX</text><rect x="1433.13" y="253.46" width="22.80" height="254.74" fill="#1eaef0"/><text x="1444.53" y="531.60" font-size="12" fill="#737373" text-anchor="middle">GBR</text><rect x="1466.14" y="352.72" width="22.80" height="155.48" fill="#1eaef0"/><text x="1477.54" y="531.60" font-size="12" fill="#737373" text-anchor="middle">DEU</text><rect x="1499.15" y="408.94" width="22.80" height="99.26" fill="#1eaef0"/><text x="1510.55" y="531.60" font-size="12" fill="#737373" text-anchor="middle">JPN</text><rect x="1532.16" y="408.13" width="22.80" height="100.07" fill="#1eaef0"/><text x="1543.56" y="531.60" font-size="12" fill="#737373" text-anchor="middle">BRA</text><rect x="1565.17" y="414.86" width="22.80" height="93.34" fill="#1eaef0"/><text x="1576.57" y="531.60" font-size="12" fill="#737373" text-anchor="middle">ESP</text><rect x="1598.18" y="420.77" width="22.80" height="87.42" fill="#1eaef0"/><text x="1609.58" y="531.60" font-size="12" fill="#737373" text-anchor="middle">AUS</text><rect x="1631.19" y="408.94" width="22.80" height="99.26" fill="#1eaef0"/><text x="1642.59" y="531.60" font-size="12" fill="#737373" text-anchor="middle">CHL</text><rect x="1664.20" y="363.75" width="22.80" height="144.45" fill="#1eaef0"/><text x="1675.60" y="531.60" font-size="12" fill="#737373" text-anchor="middle">CHN</text><rect x="1697.21" y="488.83" width="22.80" height="19.37" fill="#1eaef0"/><text x="1708.61" y="531.60" font-size="12" fill="#737373" text-anchor="middle">CRI</text><rect x="1730.22" y="347.34" width="22.80" height="160.86" fill="#1eaef0"/><text x="1741.62" y="531.60" font-size="12" fill="#737373" text-anchor="middle">FRA</text><rect x="1763.23" y="496.90" width="22.80" height="11.30" fill="#1eaef0"/><text x="1774.63" y="531.60" font-size="12" fill="#737373" text-anchor="middle">IND</text><rect x="1796.24" y="479.95" width="22.80" height="28.25" fill="#1eaef0"/><text x="1807.64" y="531.60" font-size="12" fill="#737373" text-anchor="middle">PER</text><rect x="1829.25" y="439.07" width="22.80" height="69.13" fill="#1eaef0"/><text x="1840.65" y="531.60" font-size="12" fill="#737373" text-anchor="middle">SGP</text><rect x="1862.26" y="490.98" width="22.80" height="17.22" fill="#1eaef0"/><text x="1873.66" y="531.60" font-size="12" fill="#737373" text-anchor="middle">PHL</text><line x1="1330.5" y1="239" x2="1330.5" y2="508.2" stroke="#6e6e6e" stroke-width="1"/><line x1="1324" y1="508.5" x2="1330.5" y2="508.5" stroke="#6e6e6e" stroke-width="1"/><text x="1318.50" y="512.80" font-size="12" fill="#737373" text-anchor="end" textLength="6.272737499999999" lengthAdjust="spacingAndGlyphs">0</text><line x1="1324" y1="454.5" x2="1330.5" y2="454.5" stroke="#6e6e6e" stroke-width="1"/><text x="1318.50" y="458.80" font-size="12" fill="#737373" text-anchor="end" textLength="20.0695875" lengthAdjust="spacingAndGlyphs">20K</text><line x1="1324" y1="401.5" x2="1330.5" y2="401.5" stroke="#6e6e6e" stroke-width="1"/><text x="1318.50" y="405.80" font-size="12" fill="#737373" text-anchor="end" textLength="20.0695875" lengthAdjust="spacingAndGlyphs">40K</text><line x1="1324" y1="347.5" x2="1330.5" y2="347.5" stroke="#6e6e6e" stroke-width="1"/><text x="1318.50" y="351.80" font-size="12" fill="#737373" text-anchor="end" textLength="20.0695875" lengthAdjust="spacingAndGlyphs">60K</text><line x1="1324" y1="293.5" x2="1330.5" y2="293.5" stroke="#6e6e6e" stroke-width="1"/><text x="1318.50" y="297.80" font-size="12" fill="#737373" text-anchor="end" textLength="20.0695875" lengthAdjust="spacingAndGlyphs">80K</text><line x1="1324" y1="239.5" x2="1330.5" y2="239.5" stroke="#6e6e6e" stroke-width="1"/><text x="1318.50" y="243.80" font-size="12" fill="#737373" text-anchor="end" textLength="26.342325" lengthAdjust="spacingAndGlyphs">100K</text><line x1="1330.5" y1="508.5" x2="1890" y2="508.5" stroke="#6e6e6e" stroke-width="1"/><line x1="1363.5" y1="508.5" x2="1363.5" y2="514.5" stroke="#6e6e6e" stroke-width="1"/><line x1="1396.5" y1="508.5" x2="1396.5" y2="514.5" stroke="#6e6e6e" stroke-width="1"/><line x1="1429.5" y1="508.5" x2="1429.5" y2="514.5" stroke="#6e6e6e" stroke-width="1"/><line x1="1462.5" y1="508.5" x2="1462.5" y2="514.5" stroke="#6e6e6e" stroke-width="1"/><line x1="1495.5" y1="508.5" x2="1495.5" y2="514.5" stroke="#6e6e6e" stroke-width="1"/><line x1="1528.5" y1="508.5" x2="1528.5" y2="514.5" stroke="#6e6e6e" stroke-width="1"/><line x1="1561.5" y1="508.5" x2="1561.5" y2="514.5" stroke="#6e6e6e" stroke-width="1"/><line x1="1594.5" y1="508.5" x2="1594.5" y2="514.5" stroke="#6e6e6e" stroke-width="1"/><line x1="1627.5" y1="508.5" x2="1627.5" y2="514.5" stroke="#6e6e6e" stroke-width="1"/><line x1="1660.5" y1="508.5" x2="1660.5" y2="514.5" stroke="#6e6e6e" stroke-width="1"/><line x1="1693.5" y1="508.5" x2="1693.5" y2="514.5" stroke="#6e6e6e" stroke-width="1"/><line x1="1726.5" y1="508.5" x2="1726.5" y2="514.5" stroke="#6e6e6e" stroke-width="1"/><line x1="1759.5" y1="508.5" x2="1759.5" y2="514.5" stroke="#6e6e6e" stroke-width="1"/><line x1="1792.5" y1="508.5" x2="1792.5" y2="514.5" stroke="#6e6e6e" stroke-width="1"/><line x1="1825.5" y1="508.5" x2="1825.5" y2="514.5" stroke="#6e6e6e" stroke-width="1"/><line x1="1858.5" y1="508.5" x2="1858.5" y2="514.5" stroke="#6e6e6e" stroke-width="1"/></svg>
<svg style="position:absolute;left:14px;top:559px" width="620" height="376" viewBox="14 559 620 376" ><rect x="286.00" y="621.60" width="12.00" height="12.00" fill="#8fd8f8"/><text x="305.00" y="632.10" font-size="12" fill="#737373" textLength="6.81631875" lengthAdjust="spacingAndGlyphs">F</text><rect x="331.00" y="621.60" width="12.00" height="12.00" fill="#f7a8a1"/><text x="350.00" y="632.10" font-size="12" fill="#737373" textLength="9.29593125" lengthAdjust="spacingAndGlyphs">M</text><line x1="55.8" y1="831.5" x2="548" y2="831.5" stroke="#d9d9d9" stroke-width="1"/><line x1="55.8" y1="786.5" x2="548" y2="786.5" stroke="#d9d9d9" stroke-width="1"/><line x1="55.8" y1="742.5" x2="548" y2="742.5" stroke="#d9d9d9" stroke-width="1"/><line x1="55.8" y1="698.5" x2="548" y2="698.5" stroke="#d9d9d9" stroke-width="1"/><line x1="55.8" y1="653.5" x2="548" y2="653.5" stroke="#d9d9d9" stroke-width="1"/><path d="M70.75 852.02 C83.93 851.10 90.59 851.27 103.69 849.71 C116.94 848.14 125.58 850.58 136.63 844.21 C151.93 835.39 154.52 821.67 169.57 811.74 C180.87 804.29 193.48 810.19 202.51 800.74 C219.83 782.61 222.36 742.60 235.45 742.81 C248.71 743.02 254.71 778.50 268.39 801.81 C281.06 823.39 284.15 839.66 301.32 855.04 C310.50 863.26 321.09 858.48 334.26 860.80 C347.44 863.13 353.93 865.48 367.20 866.66 C380.28 867.82 387.11 865.31 400.14 866.66 C413.46 868.04 419.77 871.81 433.08 873.49 C446.13 875.14 452.91 875.69 466.02 875.00 C479.26 874.30 485.78 870.03 498.96 870.03 C512.14 870.03 518.72 873.01 531.90 875.00 L531.90 875.0 L70.75 875.0 Z" fill="#1eb0f0" fill-opacity="0.5"/><circle cx="70.75" cy="852.02" r="6" fill="#1eb0f0"/><circle cx="103.69" cy="849.71" r="6" fill="#1eb0f0"/><circle cx="136.63" cy="844.21" r="6" fill="#1eb0f0"/><circle cx="169.57" cy="811.74" r="6" fill="#1eb0f0"/><circle cx="202.51" cy="800.74" r="6" fill="#1eb0f0"/><circle cx="235.45" cy="742.81" r="6" fill="#1eb0f0"/><circle cx="268.39" cy="801.81" r="6" fill="#1eb0f0"/><circle cx="301.32" cy="855.04" r="6" fill="#1eb0f0"/><circle cx="334.26" cy="860.80" r="6" fill="#1eb0f0"/><circle cx="367.20" cy="866.66" r="6" fill="#1eb0f0"/><circle cx="400.14" cy="866.66" r="6" fill="#1eb0f0"/><circle cx="433.08" cy="873.49" r="6" fill="#1eb0f0"/><circle cx="466.02" cy="875.00" r="6" fill="#1eb0f0"/><circle cx="498.96" cy="870.03" r="6" fill="#1eb0f0"/><circle cx="531.90" cy="875.00" r="6" fill="#1eb0f0"/><path d="M70.75 856.28 C83.93 855.71 91.55 858.83 103.69 854.86 C117.90 850.21 126.21 845.65 136.63 834.72 C152.56 818.01 153.61 802.42 169.57 785.75 C179.97 774.88 194.57 778.26 202.51 765.87 C220.92 737.13 224.24 677.29 235.45 682.92 C250.59 690.53 250.92 754.48 268.39 798.97 C277.27 821.58 284.32 835.49 301.32 850.69 C310.67 859.05 321.08 855.04 334.26 857.88 C347.43 860.71 353.95 862.49 367.20 864.89 C380.30 867.25 386.91 868.36 400.14 869.77 C413.26 871.16 419.90 871.22 433.08 871.89 C446.25 872.57 452.84 873.01 466.02 873.14 C479.19 873.26 485.80 872.16 498.96 872.52 C512.15 872.87 518.72 873.95 531.90 874.91 L531.90 875.0 L70.75 875.0 Z" fill="#ef5143" fill-opacity="0.5"/><circle cx="70.75" cy="856.28" r="6" fill="#f05545"/><circle cx="103.69" cy="854.86" r="6" fill="#f05545"/><circle cx="136.63" cy="834.72" r="6" fill="#f05545"/><circle cx="169.57" cy="785.75" r="6" fill="#f05545"/><circle cx="202.51" cy="765.87" r="6" fill="#f05545"/><circle cx="235.45" cy="682.92" r="6" fill="#f05545"/><circle cx="268.39" cy="798.97" r="6" fill="#f05545"/><circle cx="301.32" cy="850.69" r="6" fill="#f05545"/><circle cx="334.26" cy="857.88" r="6" fill="#f05545"/><circle cx="367.20" cy="864.89" r="6" fill="#f05545"/><circle cx="400.14" cy="869.77" r="6" fill="#f05545"/><circle cx="433.08" cy="871.89" r="6" fill="#f05545"/><circle cx="466.02" cy="873.14" r="6" fill="#f05545"/><circle cx="498.96" cy="872.52" r="6" fill="#f05545"/><circle cx="531.90" cy="874.91" r="6" fill="#f05545"/><line x1="55.5" y1="653" x2="55.5" y2="875.0" stroke="#6e6e6e" stroke-width="1"/><line x1="49.5" y1="875.5" x2="55.5" y2="875.5" stroke="#6e6e6e" stroke-width="1"/><text x="44.00" y="879.80" font-size="12" fill="#737373" text-anchor="end" textLength="6.272737499999999" lengthAdjust="spacingAndGlyphs">0</text><line x1="49.5" y1="831.5" x2="55.5" y2="831.5" stroke="#6e6e6e" stroke-width="1"/><text x="44.00" y="835.80" font-size="12" fill="#737373" text-anchor="end" textLength="12.545474999999998" lengthAdjust="spacingAndGlyphs">50</text><line x1="49.5" y1="786.5" x2="55.5" y2="786.5" stroke="#6e6e6e" stroke-width="1"/><text x="44.00" y="790.80" font-size="12" fill="#737373" text-anchor="end" textLength="18.818212499999998" lengthAdjust="spacingAndGlyphs">100</text><line x1="49.5" y1="742.5" x2="55.5" y2="742.5" stroke="#6e6e6e" stroke-width="1"/><text x="44.00" y="746.80" font-size="12" fill="#737373" text-anchor="end" textLength="18.818212499999998" lengthAdjust="spacingAndGlyphs">150</text><line x1="49.5" y1="698.5" x2="55.5" y2="698.5" stroke="#6e6e6e" stroke-width="1"/><text x="44.00" y="702.80" font-size="12" fill="#737373" text-anchor="end" textLength="18.818212499999998" lengthAdjust="spacingAndGlyphs">200</text><line x1="49.5" y1="653.5" x2="55.5" y2="653.5" stroke="#6e6e6e" stroke-width="1"/><text x="44.00" y="657.80" font-size="12" fill="#737373" text-anchor="end" textLength="18.818212499999998" lengthAdjust="spacingAndGlyphs">250</text><line x1="49.5" y1="875.5" x2="548" y2="875.5" stroke="#6e6e6e" stroke-width="1"/><line x1="88.5" y1="875.5" x2="88.5" y2="881.5" stroke="#6e6e6e" stroke-width="1"/><line x1="120.5" y1="875.5" x2="120.5" y2="881.5" stroke="#6e6e6e" stroke-width="1"/><line x1="153.5" y1="875.5" x2="153.5" y2="881.5" stroke="#6e6e6e" stroke-width="1"/><line x1="186.5" y1="875.5" x2="186.5" y2="881.5" stroke="#6e6e6e" stroke-width="1"/><line x1="219.5" y1="875.5" x2="219.5" y2="881.5" stroke="#6e6e6e" stroke-width="1"/><line x1="252.5" y1="875.5" x2="252.5" y2="881.5" stroke="#6e6e6e" stroke-width="1"/><line x1="285.5" y1="875.5" x2="285.5" y2="881.5" stroke="#6e6e6e" stroke-width="1"/><line x1="318.5" y1="875.5" x2="318.5" y2="881.5" stroke="#6e6e6e" stroke-width="1"/><line x1="351.5" y1="875.5" x2="351.5" y2="881.5" stroke="#6e6e6e" stroke-width="1"/><line x1="383.5" y1="875.5" x2="383.5" y2="881.5" stroke="#6e6e6e" stroke-width="1"/><line x1="416.5" y1="875.5" x2="416.5" y2="881.5" stroke="#6e6e6e" stroke-width="1"/><line x1="449.5" y1="875.5" x2="449.5" y2="881.5" stroke="#6e6e6e" stroke-width="1"/><line x1="482.5" y1="875.5" x2="482.5" y2="881.5" stroke="#6e6e6e" stroke-width="1"/><line x1="515.5" y1="875.5" x2="515.5" y2="881.5" stroke="#6e6e6e" stroke-width="1"/><text x="74.75" y="899.00" font-size="12" fill="#737373" transform="rotate(30 74.75 899.00)">0 - 9,999</text><text x="107.69" y="899.00" font-size="12" fill="#737373" transform="rotate(30 107.69 899.00)">10,000 - 19,999</text><text x="140.63" y="899.00" font-size="12" fill="#737373" transform="rotate(30 140.63 899.00)">20,000 - 29,999</text><text x="173.57" y="899.00" font-size="12" fill="#737373" transform="rotate(30 173.57 899.00)">30,000 - 39,999</text><text x="206.51" y="899.00" font-size="12" fill="#737373" transform="rotate(30 206.51 899.00)">40,000 - 49,999</text><text x="239.45" y="899.00" font-size="12" fill="#737373" transform="rotate(30 239.45 899.00)">50,000 - 59,999</text><text x="272.39" y="899.00" font-size="12" fill="#737373" transform="rotate(30 272.39 899.00)">60,000 - 69,999</text><text x="305.32" y="899.00" font-size="12" fill="#737373" transform="rotate(30 305.32 899.00)">70,000 - 79,999</text><text x="338.26" y="899.00" font-size="12" fill="#737373" transform="rotate(30 338.26 899.00)">80,000 - 89,999</text><text x="371.20" y="899.00" font-size="12" fill="#737373" transform="rotate(30 371.20 899.00)">90,000 - 99,999</text><text x="404.14" y="899.00" font-size="12" fill="#737373" transform="rotate(30 404.14 899.00)">100,000 - 109,999</text><text x="437.08" y="899.00" font-size="12" fill="#737373" transform="rotate(30 437.08 899.00)">110,000 - 119,999</text><text x="470.02" y="899.00" font-size="12" fill="#737373" transform="rotate(30 470.02 899.00)">120,000 - 129,999</text><text x="502.96" y="899.00" font-size="12" fill="#737373" transform="rotate(30 502.96 899.00)">130,000 - 139,999</text><text x="535.90" y="899.00" font-size="12" fill="#737373" transform="rotate(30 535.90 899.00)">140,000 - 149,999</text></svg>
<svg style="position:absolute;left:648px;top:559px" width="620" height="376" viewBox="648 559 620 376" ><rect x="806.00" y="621.60" width="12.00" height="12.00" fill="#1eaef0"/><text x="825.00" y="632.10" font-size="12" fill="#737373" textLength="23.55631875" lengthAdjust="spacingAndGlyphs">MET</text><rect x="890.00" y="621.60" width="12.00" height="12.00" fill="#f2554a"/><text x="909.00" y="632.10" font-size="12" fill="#737373" textLength="38.4566625" lengthAdjust="spacingAndGlyphs">ABOVE</text><rect x="971.00" y="621.60" width="12.00" height="12.00" fill="#94c95a"/><text x="990.00" y="632.10" font-size="12" fill="#737373" textLength="44.652206250000006" lengthAdjust="spacingAndGlyphs">EXCEPT</text><rect x="1051.00" y="621.60" width="12.00" height="12.00" fill="#fec41f"/><text x="1070.00" y="632.10" font-size="12" fill="#737373" textLength="40.308525" lengthAdjust="spacingAndGlyphs">BELOW</text><rect x="806.00" y="645.50" width="12.00" height="12.00" fill="#e8336b"/><text x="825.00" y="656.00" font-size="12" fill="#737373" textLength="42.77593125" lengthAdjust="spacingAndGlyphs">DIDNOT</text><rect x="890.00" y="645.50" width="12.00" height="12.00" fill="#9c3cc0"/><text x="909.00" y="656.00" font-size="12" fill="#737373" textLength="45.895500000000006" lengthAdjust="spacingAndGlyphs">EXCEED</text><rect x="971.00" y="645.50" width="12.00" height="12.00" fill="#4dd8f5"/><text x="990.00" y="656.00" font-size="12" fill="#737373" textLength="6.81631875" lengthAdjust="spacingAndGlyphs">Z</text><line x1="880.5" y1="669.0" x2="880.5" y2="922.0" stroke="#d9d9d9" stroke-width="1"/><line x1="972.5" y1="669.0" x2="972.5" y2="922.0" stroke="#d9d9d9" stroke-width="1"/><line x1="1064.5" y1="669.0" x2="1064.5" y2="922.0" stroke="#d9d9d9" stroke-width="1"/><line x1="1156.5" y1="669.0" x2="1156.5" y2="922.0" stroke="#d9d9d9" stroke-width="1"/><line x1="1246.5" y1="669.0" x2="1246.5" y2="922.0" stroke="#d9d9d9" stroke-width="1"/><rect x="787.50" y="671.27" width="1.50" height="9.60" fill="#94c95a"/><rect x="787.50" y="685.42" width="1.40" height="9.60" fill="#1eaef0"/><rect x="788.90" y="685.42" width="1.90" height="9.60" fill="#94c95a"/><rect x="790.80" y="685.42" width="2.00" height="9.60" fill="#fec41f"/><rect x="787.50" y="699.57" width="8.50" height="9.60" fill="#1eaef0"/><rect x="796.00" y="699.57" width="8.10" height="9.60" fill="#f2554a"/><rect x="804.10" y="699.57" width="0.90" height="9.60" fill="#94c95a"/><rect x="805.00" y="699.57" width="4.00" height="9.60" fill="#fec41f"/><rect x="787.50" y="713.73" width="14.50" height="9.60" fill="#1eaef0"/><rect x="802.00" y="713.73" width="2.90" height="9.60" fill="#f2554a"/><rect x="804.90" y="713.73" width="2.00" height="9.60" fill="#94c95a"/><rect x="806.90" y="713.73" width="2.00" height="9.60" fill="#fec41f"/><rect x="787.50" y="727.88" width="6.50" height="9.60" fill="#1eaef0"/><rect x="794.00" y="727.88" width="6.00" height="9.60" fill="#f2554a"/><rect x="800.00" y="727.88" width="1.90" height="9.60" fill="#94c95a"/><rect x="801.90" y="727.88" width="7.00" height="9.60" fill="#fec41f"/><rect x="787.50" y="742.02" width="5.50" height="9.60" fill="#1eaef0"/><rect x="793.00" y="742.02" width="5.00" height="9.60" fill="#f2554a"/><rect x="798.00" y="742.02" width="8.90" height="9.60" fill="#94c95a"/><rect x="806.90" y="742.02" width="6.00" height="9.60" fill="#fec41f"/><rect x="787.50" y="756.17" width="14.50" height="9.60" fill="#1eaef0"/><rect x="802.00" y="756.17" width="14.00" height="9.60" fill="#f2554a"/><rect x="816.00" y="756.17" width="1.90" height="9.60" fill="#94c95a"/><rect x="787.50" y="770.32" width="10.50" height="9.60" fill="#1eaef0"/><rect x="798.00" y="770.32" width="4.00" height="9.60" fill="#f2554a"/><rect x="802.00" y="770.32" width="2.90" height="9.60" fill="#94c95a"/><rect x="804.90" y="770.32" width="6.00" height="9.60" fill="#fec41f"/><rect x="787.50" y="784.48" width="8.50" height="9.60" fill="#1eaef0"/><rect x="796.00" y="784.48" width="11.00" height="9.60" fill="#f2554a"/><rect x="807.00" y="784.48" width="11.00" height="9.60" fill="#94c95a"/><rect x="818.00" y="784.48" width="4.00" height="9.60" fill="#fec41f"/><rect x="787.50" y="798.62" width="10.40" height="9.60" fill="#1eaef0"/><rect x="797.90" y="798.62" width="6.00" height="9.60" fill="#f2554a"/><rect x="803.90" y="798.62" width="8.90" height="9.60" fill="#94c95a"/><rect x="812.80" y="798.62" width="7.20" height="9.60" fill="#fec41f"/><rect x="820.00" y="798.62" width="2.10" height="9.60" fill="#4dd8f5"/><rect x="787.50" y="812.77" width="45.60" height="9.60" fill="#1eaef0"/><rect x="833.10" y="812.77" width="1.80" height="9.60" fill="#f2554a"/><rect x="834.90" y="812.77" width="4.50" height="9.60" fill="#94c95a"/><rect x="839.40" y="812.77" width="0.60" height="9.60" fill="#fec41f"/><rect x="787.50" y="826.92" width="58.60" height="9.60" fill="#1eaef0"/><rect x="846.10" y="826.92" width="34.90" height="9.60" fill="#f2554a"/><rect x="881.00" y="826.92" width="26.00" height="9.60" fill="#94c95a"/><rect x="907.00" y="826.92" width="11.00" height="9.60" fill="#fec41f"/><rect x="787.50" y="841.07" width="49.50" height="9.60" fill="#1eaef0"/><rect x="837.00" y="841.07" width="33.00" height="9.60" fill="#f2554a"/><rect x="870.00" y="841.07" width="33.10" height="9.60" fill="#94c95a"/><rect x="903.10" y="841.07" width="19.80" height="9.60" fill="#fec41f"/><rect x="922.90" y="841.07" width="1.90" height="9.60" fill="#9c3cc0"/><rect x="787.50" y="855.23" width="47.60" height="9.60" fill="#1eaef0"/><rect x="835.10" y="855.23" width="23.90" height="9.60" fill="#f2554a"/><rect x="859.00" y="855.23" width="27.10" height="9.60" fill="#94c95a"/><rect x="886.10" y="855.23" width="20.90" height="9.60" fill="#fec41f"/><rect x="787.50" y="869.38" width="67.60" height="9.60" fill="#1eaef0"/><rect x="855.10" y="869.38" width="43.00" height="9.60" fill="#f2554a"/><rect x="898.10" y="869.38" width="26.80" height="9.60" fill="#94c95a"/><rect x="924.90" y="869.38" width="17.20" height="9.60" fill="#fec41f"/><rect x="942.10" y="869.38" width="3.00" height="9.60" fill="#e8336b"/><rect x="787.50" y="883.52" width="71.60" height="9.60" fill="#1eaef0"/><rect x="859.10" y="883.52" width="52.90" height="9.60" fill="#f2554a"/><rect x="912.00" y="883.52" width="30.00" height="9.60" fill="#94c95a"/><rect x="942.00" y="883.52" width="30.90" height="9.60" fill="#fec41f"/><rect x="972.90" y="883.52" width="2.10" height="9.60" fill="#9c3cc0"/><rect x="787.50" y="897.67" width="62.50" height="9.60" fill="#1eaef0"/><rect x="850.00" y="897.67" width="20.00" height="9.60" fill="#f2554a"/><rect x="870.00" y="897.67" width="31.00" height="9.60" fill="#94c95a"/><rect x="901.00" y="897.67" width="34.90" height="9.60" fill="#fec41f"/><rect x="787.50" y="911.82" width="170.50" height="9.60" fill="#1eaef0"/><rect x="958.00" y="911.82" width="102.00" height="9.60" fill="#f2554a"/><rect x="1060.00" y="911.82" width="78.80" height="9.60" fill="#94c95a"/><rect x="1138.80" y="911.82" width="68.20" height="9.60" fill="#fec41f"/><rect x="1207.00" y="911.82" width="6.80" height="9.60" fill="#e8336b"/><rect x="1213.80" y="911.82" width="4.00" height="9.60" fill="#9c3cc0"/><text x="776.00" y="694.83" font-size="12" fill="#737373" text-anchor="end">Regional VP</text><text x="776.00" y="723.12" font-size="12" fill="#737373" text-anchor="end">Worldwide - Brazil</text><text x="776.00" y="751.43" font-size="12" fill="#737373" text-anchor="end">Worldwide - Germany</text><text x="776.00" y="779.73" font-size="12" fill="#737373" text-anchor="end">Worldwide - UK</text><text x="776.00" y="808.02" font-size="12" fill="#737373" text-anchor="end">Toronto - Executive</text><text x="776.00" y="836.33" font-size="12" fill="#737373" text-anchor="end">Ontario - Biweekly</text><text x="776.00" y="864.62" font-size="12" fill="#737373" text-anchor="end">Manufacturing</text><text x="776.00" y="892.93" font-size="12" fill="#737373" text-anchor="end">Management</text><text x="776.00" y="921.23" font-size="12" fill="#737373" text-anchor="end">Corporate</text><line x1="787.5" y1="669.0" x2="787.5" y2="922.0" stroke="#6e6e6e" stroke-width="1"/><line x1="781" y1="683.5" x2="787.5" y2="683.5" stroke="#6e6e6e" stroke-width="1"/><line x1="781" y1="697.5" x2="787.5" y2="697.5" stroke="#6e6e6e" stroke-width="1"/><line x1="781" y1="711.5" x2="787.5" y2="711.5" stroke="#6e6e6e" stroke-width="1"/><line x1="781" y1="726.5" x2="787.5" y2="726.5" stroke="#6e6e6e" stroke-width="1"/><line x1="781" y1="740.5" x2="787.5" y2="740.5" stroke="#6e6e6e" stroke-width="1"/><line x1="781" y1="754.5" x2="787.5" y2="754.5" stroke="#6e6e6e" stroke-width="1"/><line x1="781" y1="768.5" x2="787.5" y2="768.5" stroke="#6e6e6e" stroke-width="1"/><line x1="781" y1="782.5" x2="787.5" y2="782.5" stroke="#6e6e6e" stroke-width="1"/><line x1="781" y1="796.5" x2="787.5" y2="796.5" stroke="#6e6e6e" stroke-width="1"/><line x1="781" y1="810.5" x2="787.5" y2="810.5" stroke="#6e6e6e" stroke-width="1"/><line x1="781" y1="825.5" x2="787.5" y2="825.5" stroke="#6e6e6e" stroke-width="1"/><line x1="781" y1="839.5" x2="787.5" y2="839.5" stroke="#6e6e6e" stroke-width="1"/><line x1="781" y1="853.5" x2="787.5" y2="853.5" stroke="#6e6e6e" stroke-width="1"/><line x1="781" y1="867.5" x2="787.5" y2="867.5" stroke="#6e6e6e" stroke-width="1"/><line x1="781" y1="881.5" x2="787.5" y2="881.5" stroke="#6e6e6e" stroke-width="1"/><line x1="781" y1="895.5" x2="787.5" y2="895.5" stroke="#6e6e6e" stroke-width="1"/><line x1="781" y1="910.5" x2="787.5" y2="910.5" stroke="#6e6e6e" stroke-width="1"/><line x1="787.5" y1="922.5" x2="1247" y2="922.5" stroke="#6e6e6e" stroke-width="1"/><line x1="788.5" y1="922.5" x2="788.5" y2="928.5" stroke="#6e6e6e" stroke-width="1"/><line x1="880.5" y1="922.5" x2="880.5" y2="928.5" stroke="#6e6e6e" stroke-width="1"/><line x1="972.5" y1="922.5" x2="972.5" y2="928.5" stroke="#6e6e6e" stroke-width="1"/><line x1="1064.5" y1="922.5" x2="1064.5" y2="928.5" stroke="#6e6e6e" stroke-width="1"/><line x1="1156.5" y1="922.5" x2="1156.5" y2="928.5" stroke="#6e6e6e" stroke-width="1"/><line x1="1246.5" y1="922.5" x2="1246.5" y2="928.5" stroke="#6e6e6e" stroke-width="1"/></svg>
<svg style="position:absolute;left:1281px;top:559px" width="620" height="376" viewBox="1281 559 620 376" ><path d="M1706.30 778.70 A116.2 116.2 0 0 1 1490.07 837.83 L1540.17 808.22 A58.0 58.0 0 0 0 1648.10 778.70 Z" fill="#9966ff"/><path d="M1490.07 837.83 A116.2 116.2 0 0 1 1519.60 686.33 L1554.91 732.59 A58.0 58.0 0 0 0 1540.17 808.22 Z" fill="#65bf67"/><path d="M1519.60 686.33 A116.2 116.2 0 0 1 1649.78 678.99 L1619.89 728.93 A58.0 58.0 0 0 0 1554.91 732.59 Z" fill="#ecaa4f"/><path d="M1649.78 678.99 A116.2 116.2 0 0 1 1705.93 769.43 L1647.91 774.07 A58.0 58.0 0 0 0 1619.89 728.93 Z" fill="#cf4f4a"/><path d="M1705.93 769.43 A116.2 116.2 0 0 1 1706.22 774.48 L1648.06 776.59 A58.0 58.0 0 0 0 1647.91 774.07 Z" fill="#4f66bb"/><path d="M1706.22 774.48 A116.2 116.2 0 0 1 1706.30 777.86 L1648.10 778.28 A58.0 58.0 0 0 0 1648.06 776.59 Z" fill="#2aa5ad"/><path d="M1706.30 777.86 A116.2 116.2 0 0 1 1706.30 778.70 L1648.10 778.70 A58.0 58.0 0 0 0 1648.10 778.28 Z" fill="#d293f7"/><polyline points="1584.0,662.0 1582.3,633.3 1443.4,633.3" fill="none" stroke="#ecaa4f" stroke-width="1" stroke-opacity="0.6"/><polyline points="1689.4,717.5 1714.4,702.2 1738.3,702.2" fill="none" stroke="#cf4f4a" stroke-width="1" stroke-opacity="0.6"/><polyline points="1475.5,757.5 1443.4,750.5" fill="none" stroke="#65bf67" stroke-width="1" stroke-opacity="0.6"/><polyline points="1705.9,773.5 1752.0,771.0" fill="none" stroke="#4f66bb" stroke-width="1" stroke-opacity="0.6"/><polyline points="1705.9,776.3 1718.2,795.3 1755.1,795.3" fill="none" stroke="#2aa5ad" stroke-width="1" stroke-opacity="0.6"/><polyline points="1705.9,777.5 1718.2,819.1 1788.2,819.1" fill="none" stroke="#d293f7" stroke-width="1" stroke-opacity="0.6"/><polyline points="1620.0,890.7 1628.7,920.2 1752.9,920.2" fill="none" stroke="#9966ff" stroke-width="1" stroke-opacity="0.6"/><rect x="1325.80" y="620.70" width="117.60" height="23.90" fill="#ecaa4f"/><text x="1384.60" y="638.10" font-size="12.5" fill="#fff" text-anchor="middle" textLength="99" lengthAdjust="spacingAndGlyphs">EXCEPT : 164 (19%)</text><rect x="1325.80" y="738.80" width="116.70" height="23.90" fill="#65bf67"/><text x="1384.15" y="756.20" font-size="12.5" fill="#fff" text-anchor="middle" textLength="98" lengthAdjust="spacingAndGlyphs">ABOVE : 200 (23%)</text><rect x="1738.30" y="690.20" width="116.60" height="23.60" fill="#cf4f4a"/><text x="1796.60" y="707.60" font-size="12.5" fill="#fff" text-anchor="middle" textLength="99.6" lengthAdjust="spacingAndGlyphs">BELOW : 131 (15%)</text><rect x="1752.10" y="759.20" width="102.80" height="23.40" fill="#4f66bb"/><text x="1803.50" y="776.60" font-size="12.5" fill="#fff" text-anchor="middle" textLength="85" lengthAdjust="spacingAndGlyphs">DIDNOT : 6 (1%)</text><rect x="1755.10" y="782.60" width="99.80" height="24.20" fill="#2aa5ad"/><text x="1805.00" y="800.00" font-size="12.5" fill="#fff" text-anchor="middle" textLength="82" lengthAdjust="spacingAndGlyphs">EXCEED : 4 (0%)</text><rect x="1788.20" y="806.80" width="66.70" height="23.90" fill="#d293f7"/><text x="1821.55" y="824.20" font-size="12.5" fill="#fff" text-anchor="middle" textLength="49" lengthAdjust="spacingAndGlyphs">Z : 1 (0%)</text><rect x="1752.90" y="907.60" width="102.00" height="23.90" fill="#9966ff"/><text x="1803.90" y="925.00" font-size="12.5" fill="#fff" text-anchor="middle" textLength="85" lengthAdjust="spacingAndGlyphs">MET : 359 (42%)</text></svg>
<div class="abs" style="left:0;top:935px;width:1913px;height:4px;background:linear-gradient(#e9eaf0,#eef0f5)"></div>
</body></html>
